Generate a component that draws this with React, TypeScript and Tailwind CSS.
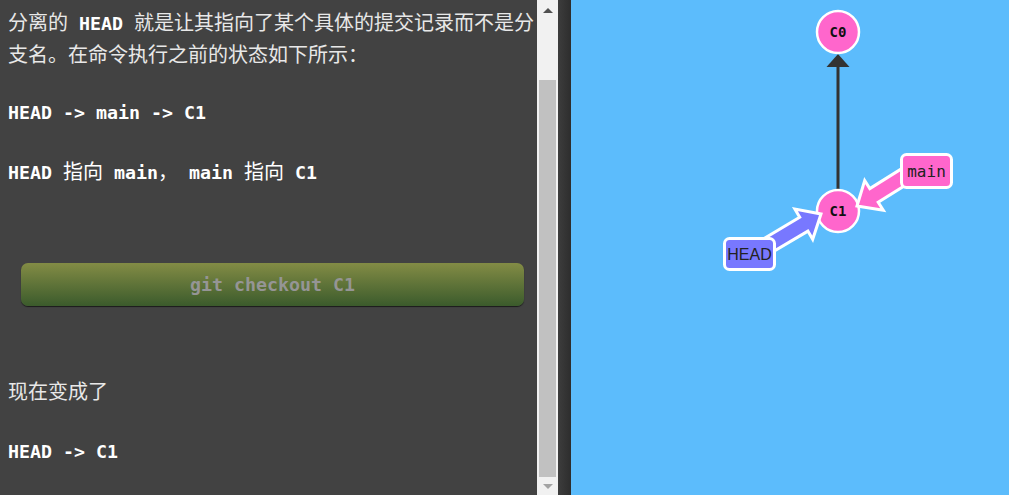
import React from 'react';

const mono = "font-['DejaVu_Sans_Mono',monospace]";
const cjk = "font-['Noto_Sans_CJK_SC',sans-serif]";

type Pt = [number, number];

// polygon for a thick arrow ending at tip, pointing along dir
const arrowPoints = (tip: Pt, dir: Pt, len: number, headLen: number, headHalf: number, shaftHalf: number) => {
  const [tx, ty] = tip;
  const [dx, dy] = dir;
  const px = -dy;
  const py = dx;
  const bx = tx - dx * headLen;
  const by = ty - dy * headLen;
  const sx = tx - dx * len;
  const sy = ty - dy * len;
  const pts: Pt[] = [
    [tx, ty],
    [bx + px * headHalf, by + py * headHalf],
    [bx + px * shaftHalf, by + py * shaftHalf],
    [sx + px * shaftHalf, sy + py * shaftHalf],
    [sx - px * shaftHalf, sy - py * shaftHalf],
    [bx - px * shaftHalf, by - py * shaftHalf],
    [bx - px * headHalf, by - py * headHalf],
  ];
  return pts.map(p => `${p[0].toFixed(1)},${p[1].toFixed(1)}`).join(' ');
};

const Code: React.FC<{ children: React.ReactNode }> = ({ children }) => (
  <span className={`${mono} font-bold text-white text-[18.3px]`}>{children}</span>
);

const Scrollbar: React.FC = () => (
  <div className="w-[21px] h-full bg-[#f1f1f1] flex flex-col items-center">
    <div className="h-[20px] flex items-center justify-center">
      <div className="w-0 h-0 border-l-[5px] border-r-[5px] border-b-[5px] border-l-transparent border-r-transparent border-b-[#505050]" />
    </div>
    <div className="h-[60px]" />
    <div className="w-[17px] h-[397px] bg-[#c1c1c1]" />
    <div className="flex-1 flex items-center justify-center">
      <div className="w-0 h-0 border-l-[5px] border-r-[5px] border-t-[5px] border-l-transparent border-r-transparent border-t-[#a3a3a3]" />
    </div>
  </div>
);

const Graph: React.FC = () => {
  const headArrow = arrowPoints([250, 214], [0.86, -0.51], 75, 20, 17.5, 8);
  const mainArrow = arrowPoints([286, 206], [-0.85, 0.53], 75, 20, 17.5, 8);
  return (
    <svg width="438" height="495" viewBox="0 0 438 495">
      <line x1="267" y1="190" x2="267" y2="64" stroke="#333" strokeWidth="3" />
      <polygon points="267,54 255.5,67 278.5,67" fill="#333" />
      <circle cx="267" cy="32" r="21" fill="#ff66cc" stroke="#fff" strokeWidth="2.5" />
      <text x="267" y="37" textAnchor="middle" fontFamily="DejaVu Sans Mono, monospace" fontWeight="bold" fontSize="14" fill="#111">C0</text>
      <circle cx="267" cy="211" r="21" fill="#ff66cc" stroke="#fff" strokeWidth="2.5" />
      <text x="267" y="216" textAnchor="middle" fontFamily="DejaVu Sans Mono, monospace" fontWeight="bold" fontSize="14" fill="#111">C1</text>
      <polygon points={headArrow} fill="#7878ff" stroke="#fff" strokeWidth="3" strokeLinejoin="miter" />
      <polygon points={mainArrow} fill="#ff66cc" stroke="#fff" strokeWidth="3" strokeLinejoin="miter" />
      <rect x="153.5" y="238.5" width="50" height="31" rx="5" fill="#7878ff" stroke="#fff" strokeWidth="3" />
      <text x="178.5" y="259.5" textAnchor="middle" fontFamily="Liberation Sans, sans-serif" fontSize="16" fill="#222">HEAD</text>
      <rect x="330.5" y="154.5" width="50" height="33" rx="5" fill="#ff66cc" stroke="#fff" strokeWidth="3" />
      <text x="355.5" y="176.5" textAnchor="middle" fontFamily="DejaVu Sans Mono, monospace" fontSize="16" fill="#222">main</text>
    </svg>
  );
};

export default function App() {
  return (
    <div className="w-[1009px] h-[495px] flex overflow-hidden bg-[#424242]">
      <div className={`w-[537px] h-full bg-[#424242] pl-[8px] pt-[7px] text-[20px] leading-[30px] text-[#e8e8e8] ${cjk}`}>
        <p className="whitespace-nowrap">
          分离的<Code> HEAD </Code>就是让其指向了某个具体的提交记录而不是分
          <br />
          支名。在命令执行之前的状态如下所示：
        </p>
        <p className="mt-[27px] whitespace-nowrap">
          <Code>HEAD -&gt; main -&gt; C1</Code>
        </p>
        <p className="mt-[28px] whitespace-nowrap">
          <Code>HEAD </Code><span className="text-white">指向</span><Code> main</Code><span className="text-white">，</span><Code> main </Code><span className="text-white">指向</span><Code> C1</Code>
        </p>
        <div className="mt-[75px] ml-[13px] w-[503px] h-[43px] rounded-[7px] bg-gradient-to-b from-[#838c45] to-[#3b5b2c] shadow-[0_1px_1px_rgba(0,0,0,0.6)] flex items-center justify-center">
          <span className={`${mono} font-bold text-[18.3px] text-[#959595]`}>git checkout C1</span>
        </div>
        <p className="mt-[70px] whitespace-nowrap">现在变成了</p>
        <p className="mt-[29px] whitespace-nowrap">
          <Code>HEAD -&gt; C1</Code>
        </p>
      </div>
      <Scrollbar />
      <div className="w-[13px] h-full bg-gradient-to-r from-[#3d3d3d] to-[#2d2d2d]" />
      <div className="flex-1 h-full bg-[#5cbcfc]">
        <Graph />
      </div>
    </div>
  );
}
